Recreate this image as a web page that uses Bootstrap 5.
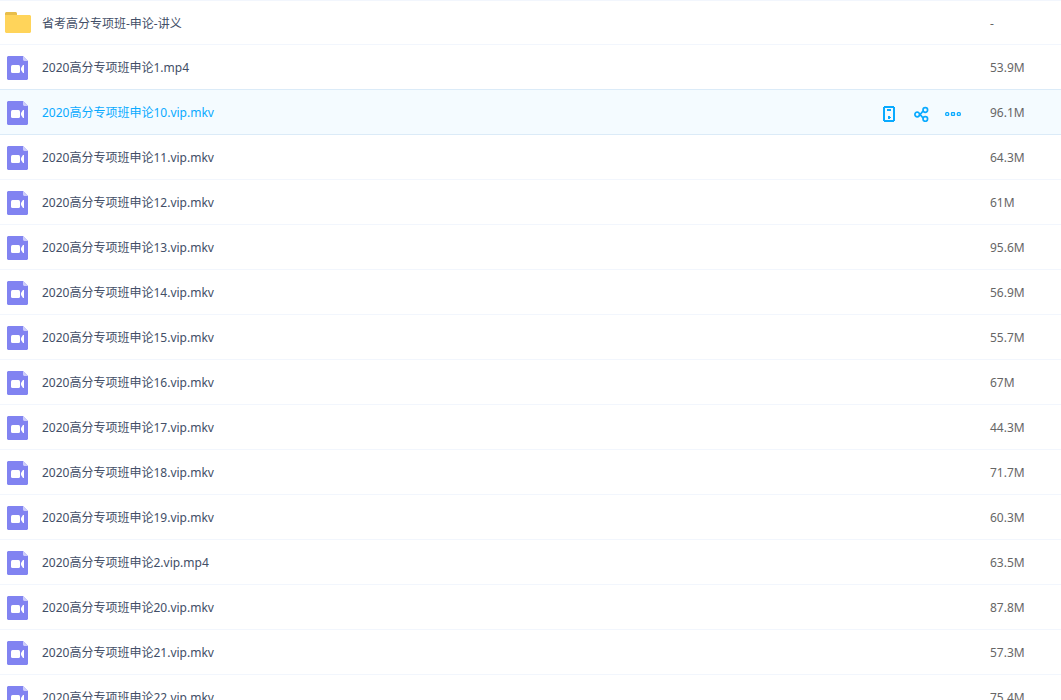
<!DOCTYPE html>
<html lang="zh-CN">
<head>
<meta charset="utf-8">
<meta name="viewport" content="width=device-width, initial-scale=1">
<title>文件列表</title>
<link href="https://cdn.jsdelivr.net/npm/bootstrap@5.3.0/dist/css/bootstrap.min.css" rel="stylesheet">
<style>
body { font: 12px/16px "Noto Sans", "Noto Sans CJK SC", sans-serif; color: #424e67; }
.file-pane { height: 100vh; }
.file-table { --bs-table-color: #424e67; --bs-table-bg: transparent; table-layout: fixed; border-top: 1px solid #f2f6fd; }
.file-table > tbody > tr { height: 45px; }
.file-table > tbody > tr:first-child { height: 44px; }
.file-table > tbody > tr > td { padding: 0; border-bottom: 1px solid #f2f6fd; vertical-align: middle; }
.file-table .size-col { width: 71px; }
.file-table > tbody > tr > td:last-child { color: #666; padding-top: 2px; }
.file-table > tbody > tr.is-active > td { background: #f4fbff; border-color: #dbebf8; }
.file-table > tbody > tr.before-active > td { border-color: #dbebf8; }
.name-cell { padding-left: 5px; gap: 11px; }
.name-cell a { color: inherit; text-decoration: none; padding-top: 2px; }
.is-active .name-cell a { color: #09aaff; }
.file-icon { width: 26px; height: 26px; }
.row-tools { gap: 16px; padding: 4px 29px 0 0; }
.row-tools .btn { --bs-btn-padding-x: 0; --bs-btn-padding-y: 0; width: 16px; height: 16px; color: #09aaff; line-height: 1; border: 0; }
.row-tools svg { display: block; width: 16px; height: 16px; }
</style>
<script src="https://cdn.jsdelivr.net/npm/bootstrap@5.3.0/dist/js/bootstrap.bundle.min.js"></script>
</head>
<body>
<svg class="d-none" aria-hidden="true">
  <symbol id="folder" viewBox="0 0 26 26">
    <path fill="#e8be4b" d="M1 2h10l1 1v4H0V3z"/>
    <path fill="#ffd45a" d="M0 5h25l1 1v16l-1 1H1l-1-1z"/>
  </symbol>
  <symbol id="video" viewBox="0 0 26 26">
    <path fill="#8183f1" d="M3 2h15l5 5v18l-1 1H3l-1-1V3z"/>
    <path fill="#cdcdfa" d="M18 2l5 5h-4l-1-1z"/>
    <rect x="6" y="11" width="9" height="8" rx="1.5" fill="#fff"/>
    <path fill="#fff" d="M16 14l2-3h1v8h-1l-2-3z"/>
  </symbol>
</svg>
<main class="file-pane overflow-hidden">
<table class="table file-table w-100 mb-0" aria-label="文件列表">
  <colgroup><col><col class="size-col"></colgroup>
  <tbody id="files">
    <tr><td><div class="name-cell d-flex align-items-center"><svg class="file-icon" aria-hidden="true"><use href="#folder"/></svg><a href="#">省考高分专项班-申论-讲义</a></div></td><td>-</td></tr>
    <tr class="before-active"><td><div class="name-cell d-flex align-items-center"><svg class="file-icon" aria-hidden="true"><use href="#video"/></svg><a href="#">2020高分专项班申论1.mp4</a></div></td><td>53.9M</td></tr>
    <tr class="is-active"><td><div class="name-cell d-flex align-items-center"><svg class="file-icon" aria-hidden="true"><use href="#video"/></svg><a href="#">2020高分专项班申论10.vip.mkv</a>
      <div class="row-tools d-flex ms-auto">
        <button type="button" class="btn" aria-label="发送到手机"><svg viewBox="0 0 16 16" fill="currentColor" shape-rendering="crispEdges"><path fill-rule="evenodd" d="M3 0h10v1h1v14h-1v1H3v-1H2V1h1zM4 2v12h8V2z"/><path d="M6 3h4v2H6zM7 10h2v1h1v1H9v1H7z"/></svg></button>
        <button type="button" class="btn" aria-label="分享"><svg viewBox="0 0 16 16" fill="none" stroke="currentColor" stroke-width="1.7"><circle cx="4.200" cy="8.500" r="2.300"/><circle cx="12.300" cy="4" r="2.300"/><circle cx="12.300" cy="13" r="2.300"/><path d="M6.500 8L8 7.500 10 5M6.500 9l1.500.5 2 2.500"/></svg></button>
        <button type="button" class="btn" aria-label="更多"><svg viewBox="0 0 16 16" fill="none" stroke="currentColor" stroke-width="1.3"><rect x=".7" y="6.700" width="3" height="2.700" rx="1"/><rect x="6.500" y="6.700" width="3" height="2.700" rx=".5"/><rect x="12.300" y="6.700" width="3" height="2.700" rx="1"/></svg></button>
      </div></div></td><td>96.1M</td></tr>
  </tbody>
</table>
</main>
<script>
const files = [
  ["11.vip.mkv", "64.3M"], ["12.vip.mkv", "61M"], ["13.vip.mkv", "95.6M"],
  ["14.vip.mkv", "56.9M"], ["15.vip.mkv", "55.7M"], ["16.vip.mkv", "67M"],
  ["17.vip.mkv", "44.3M"], ["18.vip.mkv", "71.7M"], ["19.vip.mkv", "60.3M"],
  ["2.vip.mp4", "63.5M"], ["20.vip.mkv", "87.8M"], ["21.vip.mkv", "57.3M"],
  ["22.vip.mkv", "75.4M"]
];
document.getElementById("files").insertAdjacentHTML("beforeend", files.map(([name, size]) =>
  `<tr><td><div class="name-cell d-flex align-items-center"><svg class="file-icon" aria-hidden="true"><use href="#video"/></svg><a href="#">2020高分专项班申论${name}</a></div></td><td>${size}</td></tr>`
).join(""));
</script>
</body>
</html>
